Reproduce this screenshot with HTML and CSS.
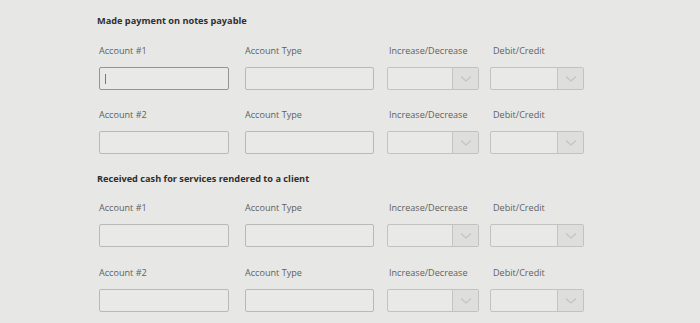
FILE: index.html
```html
<!DOCTYPE html>
<html lang="en">
  <head>
    <meta charset="UTF-8" />
    <title>Journal Entries</title>
    <link rel="stylesheet" href="styles.css">
  </head>
  <body>
    <div class="section">
      <h4 class="title">Made payment on notes payable</h4>
      <div class="row">
        <div class="field acct"><label>Account #1</label><div class="box focused"><span class="caret"></span></div></div>
        <div class="field type"><label>Account Type</label><div class="box"></div></div>
        <div class="field inc"><label>Increase/Decrease</label><div class="select"><span class="val"></span><span class="arrow"><svg width="12" height="8" viewBox="0 0 12 8"><path d="M1 1.5 L6 6 L11 1.5" fill="none" stroke="#c4c4c4" stroke-width="1.3"/></svg></span></div></div>
        <div class="field dc"><label>Debit/Credit</label><div class="select"><span class="val"></span><span class="arrow"><svg width="12" height="8" viewBox="0 0 12 8"><path d="M1 1.5 L6 6 L11 1.5" fill="none" stroke="#c4c4c4" stroke-width="1.3"/></svg></span></div></div>
      </div>
      <div class="row">
        <div class="field acct"><label>Account #2</label><div class="box"></div></div>
        <div class="field type"><label>Account Type</label><div class="box"></div></div>
        <div class="field inc"><label>Increase/Decrease</label><div class="select"><span class="val"></span><span class="arrow"><svg width="12" height="8" viewBox="0 0 12 8"><path d="M1 1.5 L6 6 L11 1.5" fill="none" stroke="#c4c4c4" stroke-width="1.3"/></svg></span></div></div>
        <div class="field dc"><label>Debit/Credit</label><div class="select"><span class="val"></span><span class="arrow"><svg width="12" height="8" viewBox="0 0 12 8"><path d="M1 1.5 L6 6 L11 1.5" fill="none" stroke="#c4c4c4" stroke-width="1.3"/></svg></span></div></div>
      </div>
    </div>
    <div class="section">
      <h4 class="title">Received cash for services rendered to a client</h4>
      <div class="row">
        <div class="field acct"><label>Account #1</label><div class="box"></div></div>
        <div class="field type"><label>Account Type</label><div class="box"></div></div>
        <div class="field inc"><label>Increase/Decrease</label><div class="select"><span class="val"></span><span class="arrow"><svg width="12" height="8" viewBox="0 0 12 8"><path d="M1 1.5 L6 6 L11 1.5" fill="none" stroke="#c4c4c4" stroke-width="1.3"/></svg></span></div></div>
        <div class="field dc"><label>Debit/Credit</label><div class="select"><span class="val"></span><span class="arrow"><svg width="12" height="8" viewBox="0 0 12 8"><path d="M1 1.5 L6 6 L11 1.5" fill="none" stroke="#c4c4c4" stroke-width="1.3"/></svg></span></div></div>
      </div>
      <div class="row">
        <div class="field acct"><label>Account #2</label><div class="box"></div></div>
        <div class="field type"><label>Account Type</label><div class="box"></div></div>
        <div class="field inc"><label>Increase/Decrease</label><div class="select"><span class="val"></span><span class="arrow"><svg width="12" height="8" viewBox="0 0 12 8"><path d="M1 1.5 L6 6 L11 1.5" fill="none" stroke="#c4c4c4" stroke-width="1.3"/></svg></span></div></div>
        <div class="field dc"><label>Debit/Credit</label><div class="select"><span class="val"></span><span class="arrow"><svg width="12" height="8" viewBox="0 0 12 8"><path d="M1 1.5 L6 6 L11 1.5" fill="none" stroke="#c4c4c4" stroke-width="1.3"/></svg></span></div></div>
      </div>
    </div>
  </body>
</html>
```

FILE: styles.css
```css
body {
  font-family: "Open Sans", Arial, sans-serif;
  margin: 0;
  padding: 15px 0 0 97px;
  background-color: #e7e7e5;
  height: 323px;
  box-sizing: border-box;
  overflow: hidden;
}
.title {
  margin: 0;
  font-size: 9.2px;
  line-height: 12px;
  font-weight: bold;
  color: #2f2f2f;
}
.section + .section {
  margin-top: 19px;
}
.row {
  display: flex;
  margin-top: 19px;
}
.section .row:first-of-type {
  margin-top: 18px;
}
.section + .section .row:first-of-type {
  margin-top: 17px;
}
.section + .section .row:last-of-type {
  margin-top: 20px;
}
.field label {
  display: block;
  font-size: 9.1px;
  line-height: 12px;
  color: #5f5f5f;
  margin-bottom: 10px;
}
.acct {
  width: 130px;
  margin-left: 2px;
  margin-right: 16px;
}
.type {
  width: 129px;
  margin-right: 13px;
}
.inc {
  width: 92px;
  margin-right: 11px;
}
.inc label {
  margin-left: 2px;
}
.dc {
  width: 94px;
}
.dc label {
  margin-left: 3px;
}
.box,
.select {
  height: 23px;
  box-sizing: border-box;
  border: 1.5px solid #b9b9b7;
  border-radius: 2px;
  background-color: #e9e9e8;
}
.box.focused {
  border-color: #8f9696;
  display: flex;
  align-items: center;
  padding-left: 5px;
}
.caret {
  width: 1px;
  height: 10px;
  background-color: #777;
}
.select {
  display: flex;
  border-color: #c2c2c0;
}
.select .val {
  flex: 1;
  border-right: 1.5px solid #c4c4c2;
}
.select .arrow {
  width: 25px;
  background-color: #dededc;
  display: flex;
  align-items: center;
  justify-content: center;
}
```
